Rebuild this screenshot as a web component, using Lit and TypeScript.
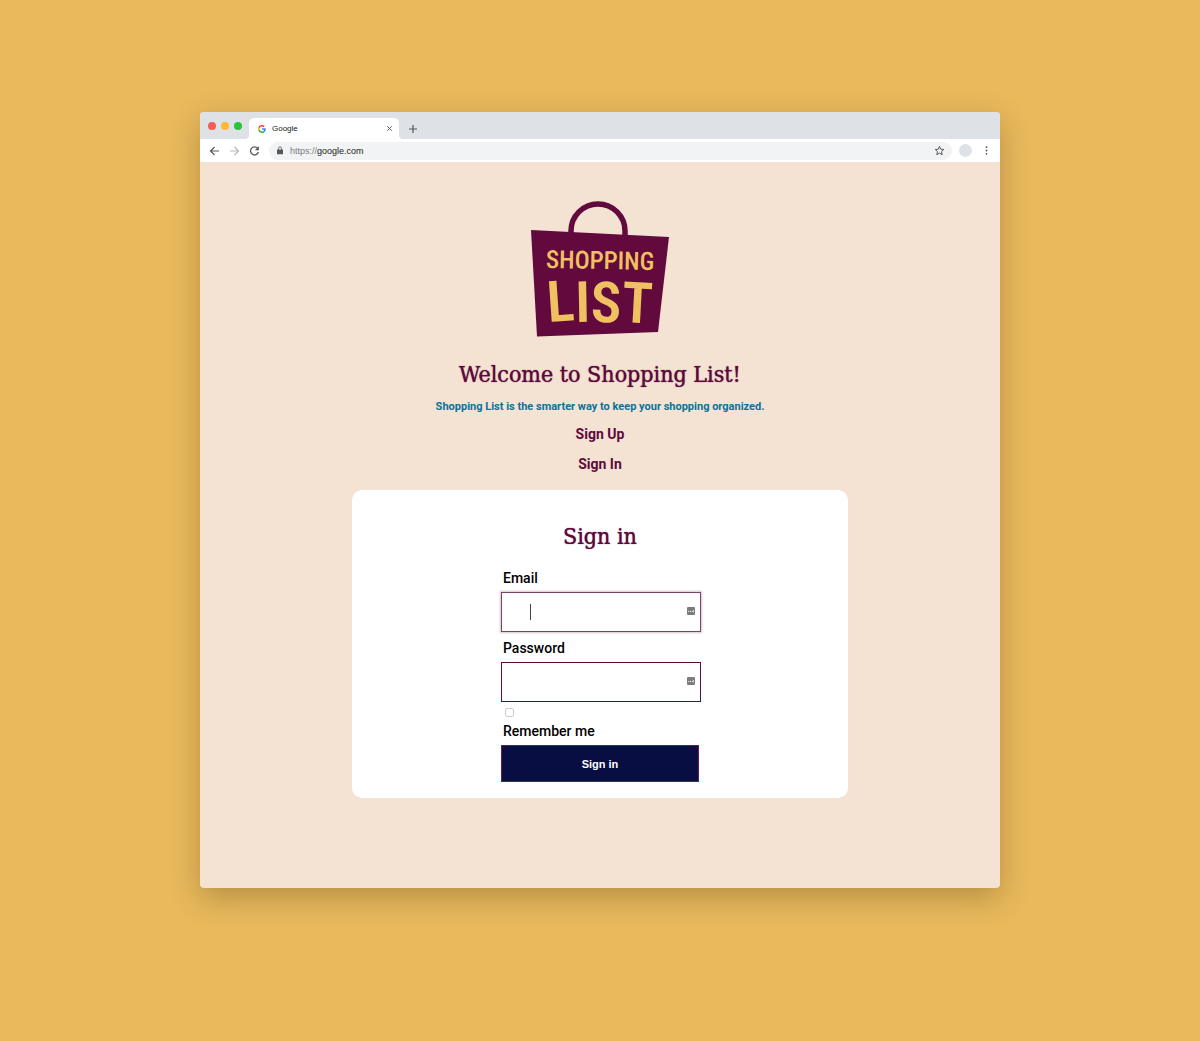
import { LitElement, html, css, svg } from "lit";
import { customElement, property } from "lit/decorators.js";

@customElement("browser-chrome")
export class BrowserChrome extends LitElement {
  @property() tabTitle = "Google";
  @property() scheme = "https://";
  @property() host = "google.com";

  static styles = css`
    :host {
      display: block;
      font-family: "Liberation Sans", Arial, sans-serif;
      color: #202124;
    }
    button {
      display: grid;
      place-items: center;
      padding: 0;
      border: 0;
      background: none;
      color: #55585d;
      font: inherit;
    }
    svg {
      display: block;
    }
    .tabs {
      display: flex;
      align-items: flex-end;
      height: 27px;
      padding-left: 8px;
      background: #dee1e6;
      border-radius: 4px 4px 0 0;
    }
    .lights {
      display: flex;
      gap: 5px;
      align-self: center;
      margin-right: 7px;
      padding-top: 1px;
    }
    .light {
      width: 8px;
      height: 8px;
      border-radius: 50%;
    }
    .close { background: #f45c55; }
    .minimise { background: #f9bb35; }
    .expand { background: #2bc240; }
    .tab {
      position: relative;
      display: flex;
      align-items: center;
      width: 150px;
      height: 21px;
      padding: 0 6px 0 9px;
      box-sizing: border-box;
      gap: 6px;
      background: #fff;
      border-radius: 5px 5px 0 0;
      font-size: 8px;
      line-height: 12px;
    }
    .tab::before,
    .tab::after {
      content: "";
      position: absolute;
      bottom: 0;
      width: 4px;
      height: 4px;
    }
    .tab::before {
      right: 100%;
      background: radial-gradient(circle at 0 0, transparent 4px, #fff 4px);
    }
    .tab::after {
      left: 100%;
      background: radial-gradient(circle at 100% 0, transparent 4px, #fff 4px);
    }
    .title {
      flex: 1;
    }
    .new-tab {
      width: 12px;
      height: 21px;
      margin-left: 8px;
    }
    .toolbar {
      display: flex;
      align-items: center;
      height: 23px;
      padding: 0 9px;
      background: #fff;
    }
    .nav {
      display: flex;
      gap: 8px;
      margin-right: 8px;
    }
    .forward {
      color: #b4b6b9;
    }
    .omnibox {
      display: flex;
      flex: 1;
      align-items: center;
      height: 18px;
      padding: 0 7px;
      background: #f1f3f4;
      border-radius: 9px;
      font-size: 9px;
      line-height: 12px;
    }
    .address {
      display: flex;
      flex: 1;
      padding-left: 6px;
      color: #7b7e82;
    }
    .address input {
      flex: 1;
      min-width: 0;
      padding: 0;
      border: 0;
      outline: 0;
      background: none;
      color: #202124;
      font: inherit;
    }
    .avatar {
      width: 13px;
      height: 13px;
      margin: 0 10px 0 7px;
      border-radius: 50%;
      background: #dee1e6;
    }
  `;

  render() {
    return html`
      <div class="tabs">
        <div class="lights">
          <button class="light close" aria-label="Close window"></button>
          <button class="light minimise" aria-label="Minimise window"></button>
          <button class="light expand" aria-label="Expand window"></button>
        </div>
        <div class="tab">
          <svg width="8" height="8" viewBox="0 0 48 48" aria-hidden="true">
            <path fill="#ea4335" d="M24 9.500c3.500 0 6.700 1.200 9.200 3.600l6.900-6.900C35.900 2.400 30.500 0 24 0 14.600 0 6.500 5.400 2.600 13.200l8 6.200C12.400 13.700 17.700 9.500 24 9.500z"/>
            <path fill="#4285f4" d="M47 24.600c0-1.600-.2-3.100-.4-4.600H24v9h12.900c-.6 3-2.200 5.500-4.700 7.200l7.700 6c4.500-4.200 7.100-10.400 7.100-17.600z"/>
            <path fill="#fbbc05" d="M10.500 28.600A14.500 14.500 0 0 1 10.500 19.400l-8-6.200a24 24 0 0 0 0 21.600z"/>
            <path fill="#34a853" d="M24 48c6.500 0 11.900-2.100 15.900-5.800l-7.700-6c-2.200 1.500-4.900 2.300-8.200 2.300-6.300 0-11.600-4.200-13.500-9.900l-8 6.200C6.500 42.600 14.600 48 24 48z"/>
          </svg>
          <span class="title">${this.tabTitle}</span>
          <button aria-label="Close tab">
            <svg width="7" height="7" viewBox="0 0 7 7"><path d="M1.300 1.300l4.400 4.400M5.700 1.300L1.300 5.700" stroke="currentColor"/></svg>
          </button>
        </div>
        <button class="new-tab" aria-label="New tab">
          <svg width="10" height="10" viewBox="0 0 10 10"><path d="M5 1v8M1 5h8" stroke="currentColor" stroke-width="1.200"/></svg>
        </button>
      </div>
      <div class="toolbar">
        <div class="nav">
          <button aria-label="Back">
            <svg width="12" height="12" viewBox="0 0 12 12" fill="none" stroke="currentColor" stroke-width="1.200"><path d="M10 6H1.500M5.500 2L1.500 6l4 4"/></svg>
          </button>
          <button class="forward" aria-label="Forward">
            <svg width="12" height="12" viewBox="0 0 12 12" fill="none" stroke="currentColor" stroke-width="1.200"><path d="M1 6H9.500M5.500 2l4 4-4 4"/></svg>
          </button>
          <button aria-label="Reload">
            <svg width="12" height="12" viewBox="0 0 12 12"><path d="M8.700 3.500A4 4 0 1 0 9.400 7" fill="none" stroke="currentColor" stroke-width="1.300"/><path d="M9.900 1.300v4H5.900z" fill="currentColor"/></svg>
          </button>
        </div>
        <div class="omnibox">
          <svg width="8" height="9" viewBox="0 0 8 9" aria-hidden="true"><rect x="1" y="3.500" width="6" height="4.800" rx=".6" fill="#55585d"/><path d="M2.500 4V2.300a1.500 1.500 0 0 1 3 0V4" fill="none" stroke="#55585d" stroke-width=".8"/></svg>
          <label class="address" for="url">${this.scheme}<input id="url" type="text" .value=${this.host} /></label>
          <button aria-label="Bookmark">
            <svg width="11" height="11" viewBox="0 0 11 11"><path d="M5.500 1.300l1.200 2.900 3.100.3-2.300 2.100.7 3.100-2.700-1.600-2.700 1.600.7-3.100L1.200 4.500l3.100-.3z" fill="none" stroke="currentColor"/></svg>
          </button>
        </div>
        <button class="avatar" aria-label="Profile"></button>
        <button aria-label="Menu">
          <svg width="9" height="9" viewBox="0 0 9 9" fill="currentColor"><circle cx="4.500" cy="1.200" r=".9"/><circle cx="4.500" cy="4.500" r=".9"/><circle cx="4.500" cy="7.800" r=".9"/></svg>
        </button>
      </div>
    `;
  }
}

@customElement("bag-logo")
export class BagLogo extends LitElement {
  static styles = css`
    :host,
    svg {
      display: block;
    }
    text {
      font-family: "Roboto Condensed", Roboto, "Liberation Sans", sans-serif;
      fill: #f0c160;
    }
    .small {
      font-size: 25px;
      font-weight: 500;
    }
    .large {
      font-size: 57px;
      font-weight: 600;
    }
  `;

  render() {
    return html`
      <svg width="140" height="138" viewBox="0 0 140 138" role="img" aria-label="Shopping List">
        ${svg`
          <path d="M41 34V31A27 27 0 0 1 95 31V36" fill="none" stroke="#620a3e" stroke-width="5.500"/>
          <path d="M1 30L139 37 128 132 7 136.500z" fill="#620a3e"/>
          <text class="small" x="70" y="69" text-anchor="middle" transform="rotate(1 70 69)">SHOPPING</text>
          <text class="large" x="70" y="122" text-anchor="middle" rotate="-4 -1 1 3">LIST</text>
        `}
      </svg>
    `;
  }
}

@customElement("sign-in-card")
export class SignInCard extends LitElement {
  static styles = css`
    :host {
      display: block;
      box-sizing: border-box;
      padding: 30px 16px 16px;
      background: #fff;
      border-radius: 10px;
    }
    h2 {
      margin: 0 0 16px;
      font-family: "Roboto Slab", "DejaVu Serif Condensed", "DejaVu Serif", serif;
      font-size: 23px;
      line-height: 32px;
      font-weight: 500;
      text-align: center;
      color: #5c0a3c;
      text-shadow: 0 0 1px #5c0a3c;
    }
    form {
      display: flex;
      flex-direction: column;
      gap: 4px;
      width: 198px;
      margin: 0 auto;
      color: #000;
    }
    .field {
      display: flex;
      flex-direction: column;
      gap: 4px;
      width: 200px;
      margin-bottom: 2px;
    }
    label {
      padding-left: 2px;
      font-size: 14px;
      line-height: 20px;
      font-weight: 500;
    }
    .box {
      display: grid;
      position: relative;
    }
    .box input {
      box-sizing: border-box;
      width: 100%;
      height: 40px;
      padding: 0 28px;
      border: 1px solid #5c0a3c;
      border-radius: 0;
      outline: 0;
      background: #fff;
      font: inherit;
      font-size: 14px;
    }
    .box.active input {
      border-color: #7a4468;
      box-shadow: 0 0 2px 1px #d9c3d2;
    }
    .caret {
      position: absolute;
      left: 29px;
      top: 12px;
      width: 1px;
      height: 16px;
      background: #444;
    }
    .manager {
      position: absolute;
      right: 6px;
      top: 15px;
    }
    .check {
      appearance: none;
      box-sizing: border-box;
      width: 9px;
      height: 9px;
      margin: 0 0 0 4px;
      border: 1px solid #ccc;
      border-radius: 2px;
      background: #fff;
    }
    .submit {
      height: 37px;
      padding: 0;
      border: 1px solid #6a1c50;
      background: #080d42;
      color: #fff;
      font: 700 11px/16px "Liberation Sans", Arial, sans-serif;
    }
  `;

  private field(id: string, label: string, type: string, active: boolean) {
    return html`
      <div class="field">
        <label for=${id}>${label}</label>
        <div class="box ${active ? "active" : ""}">
          <input id=${id} type=${type} />
          ${active ? html`<span class="caret"></span>` : ""}
          <svg class="manager" width="8" height="8" viewBox="0 0 8 8" aria-hidden="true">
            <rect width="8" height="8" rx="1" fill="#7c7c7c"/>
            <g fill="#fff"><circle cx="1.700" cy="4.300" r=".6"/><circle cx="3.500" cy="4.300" r=".6"/><circle cx="5.300" cy="4.300" r=".6"/><rect x="6.400" y="3" width=".6" height="2.500"/></g>
          </svg>
        </div>
      </div>
    `;
  }

  render() {
    return html`
      <h2>Sign in</h2>
      <form>
        ${this.field("email", "Email", "email", true)}
        ${this.field("password", "Password", "password", false)}
        <input class="check" id="remember" type="checkbox" />
        <label for="remember">Remember me</label>
        <button class="submit" type="button">Sign in</button>
      </form>
    `;
  }
}

@customElement("app-root")
export class AppRoot extends LitElement {
  static styles = css`
    :host {
      display: flex;
      flex-direction: column;
      box-sizing: border-box;
      min-height: 100vh;
      padding: 112px 24px 153px;
      background: #e9b95c;
      font-family: Roboto, "Liberation Sans", sans-serif;
    }
    .window {
      display: flex;
      flex: 1;
      flex-direction: column;
      width: 100%;
      max-width: 800px;
      margin: 0 auto;
      border-radius: 4px;
      background: #f4e2d2;
      box-shadow: 0 10px 30px rgba(70, 50, 10, 0.3);
    }
    main {
      display: flex;
      flex-direction: column;
      align-items: center;
      padding: 38px 16px;
      color: #5c0a3c;
      text-align: center;
    }
    h1 {
      margin: 20px 0 0;
      font-family: "Roboto Slab", "DejaVu Serif Condensed", "DejaVu Serif", serif;
      font-size: 23px;
      line-height: 32px;
      font-weight: 500;
      text-shadow: 0 0 1px #5c0a3c;
    }
    p {
      margin: 8px 0;
      font-size: 11px;
      line-height: 18px;
      font-weight: 700;
      color: #0b7299;
    }
    nav {
      display: flex;
      flex-direction: column;
      gap: 10px;
      margin-bottom: 16px;
    }
    a {
      color: inherit;
      font-size: 14px;
      line-height: 20px;
      font-weight: 700;
      text-decoration: none;
    }
    sign-in-card {
      width: 100%;
      max-width: 496px;
      text-align: left;
    }
  `;

  render() {
    return html`
      <div class="window">
        <browser-chrome></browser-chrome>
        <main>
          <bag-logo></bag-logo>
          <h1>Welcome to Shopping List!</h1>
          <p>Shopping List is the smarter way to keep your shopping organized.</p>
          <nav>
            <a href="#sign-up">Sign Up</a>
            <a href="#sign-in">Sign In</a>
          </nav>
          <sign-in-card></sign-in-card>
        </main>
      </div>
    `;
  }
}
